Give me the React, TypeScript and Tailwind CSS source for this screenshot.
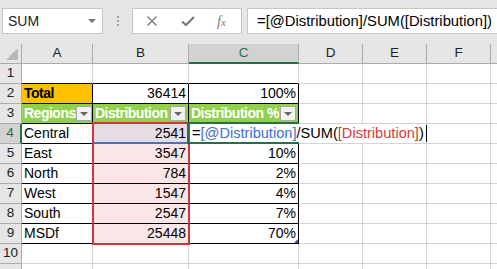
import clsx from "clsx";

const colWidths = ["w-[22px]", "w-[71px]", "w-[96px]", "w-[110px]", "w-[64px]", "w-[64px]", "w-[64px]", "w-[64px]"];
const letters = ["A", "B", "C", "D", "E", "F", ""];

type CellSpec = {
    text?: string;
    align?: "left" | "right";
    bg?: string;
    bold?: boolean;
    white?: boolean;
    filter?: boolean;
    black?: boolean;
};

const rows: CellSpec[][] = [
    [{}, {}, {}],
    [
        { text: "Total", bold: true, bg: "bg-[#ffc000]", black: true },
        { text: "36414", align: "right", black: true },
        { text: "100%", align: "right", black: true },
    ],
    [
        { text: "Regions", bold: true, white: true, bg: "bg-[#92d050]", filter: true, black: true },
        { text: "Distribution", bold: true, white: true, bg: "bg-[#92d050]", filter: true, black: true },
        { text: "Distribution %", bold: true, white: true, bg: "bg-[#92d050]", filter: true, black: true },
    ],
    [
        { text: "Central", black: true },
        { text: "2541", align: "right", bg: "bg-[#e6dce4]", black: true },
        { text: "", black: true },
    ],
    [{ text: "East", black: true }, { text: "3547", align: "right", bg: "bg-[#fae6e6]", black: true }, { text: "10%", align: "right", black: true }],
    [{ text: "North", black: true }, { text: "784", align: "right", bg: "bg-[#fae6e6]", black: true }, { text: "2%", align: "right", black: true }],
    [{ text: "West", black: true }, { text: "1547", align: "right", bg: "bg-[#fae6e6]", black: true }, { text: "4%", align: "right", black: true }],
    [{ text: "South", black: true }, { text: "2547", align: "right", bg: "bg-[#fae6e6]", black: true }, { text: "7%", align: "right", black: true }],
    [{ text: "MSDf", black: true }, { text: "25448", align: "right", bg: "bg-[#fae6e6]", black: true }, { text: "70%", align: "right", black: true }],
    [{}, {}, {}],
    [{}, {}, {}],
];

function FilterButton() {
    return (
        <div className="ml-auto flex h-[15px] w-[16px] shrink-0 items-center justify-center border border-[#a6a6a6] bg-[#f2f2f2]">
            <div className="h-0 w-0 border-x-[4px] border-t-[4px] border-x-transparent border-t-[#666]" />
        </div>
    );
}

function Toolbar() {
    return (
        <div className="flex h-[44px] items-start bg-[#e6e6e6] pt-[8px]">
            <div className="ml-[2px] flex h-[26px] w-[101px] shrink-0 items-center border border-[#c6c6c6] bg-white pl-[5px] pr-[6px] text-[14px] text-[#222]">
                SUM
                <div className="ml-auto h-0 w-0 border-x-[4px] border-t-[4px] border-x-transparent border-t-[#777]" />
            </div>
            <div className="ml-[13px] flex h-[26px] w-[3px] flex-col items-center justify-center gap-[2px]">
                <div className="h-[2px] w-[2px] bg-[#a0a0a0]" />
                <div className="h-[2px] w-[2px] bg-[#a0a0a0]" />
                <div className="h-[2px] w-[2px] bg-[#a0a0a0]" />
            </div>
            <div className="ml-[13px] flex h-[26px] w-[110px] shrink-0 items-center border border-[#c6c6c6] bg-white pl-[13px]">
                <svg width="12" height="12" viewBox="0 0 12 12" className="text-[#7a7a7a]">
                    <path d="M1.5 1.5 L10.5 10.5 M10.5 1.5 L1.5 10.5" stroke="currentColor" strokeWidth="1.4" />
                </svg>
                <svg width="14" height="12" viewBox="0 0 14 12" className="ml-[23px] text-[#7a7a7a]">
                    <path d="M1 6.5 L5 10 L13 2" stroke="currentColor" strokeWidth="2.2" fill="none" />
                </svg>
                <span className="ml-[22px] font-['Liberation_Serif'] text-[14px] italic text-[#7a7a7a]">
                    f<span className="text-[11px]">x</span>
                </span>
            </div>
            <div className="ml-[5px] flex h-[26px] flex-1 items-center border border-r-0 border-[#c6c6c6] bg-white pl-[9px] text-[14.8px] text-black">
                =[@Distribution]/SUM([Distribution])
            </div>
        </div>
    );
}

function HeaderRow() {
    return (
        <div className="flex h-[20px] bg-[#e6e6e6]">
            <div className={clsx(colWidths[0], "relative h-full shrink-0 border-r border-b border-[#ababab]")}>
                <div className="absolute right-[3px] bottom-[3px] h-0 w-0 border-b-[12px] border-l-[12px] border-l-transparent border-b-[#b7b7b7]" />
            </div>
            {letters.map((l, i) => (
                <div
                    key={i}
                    className={clsx(
                        colWidths[i + 1],
                        "flex h-full shrink-0 items-center justify-center border-r border-[#ababab] text-[13.5px]",
                        l === "C" ? "border-b-2 border-b-[#217346] bg-[#d2d2d2] text-[#217346]" : "border-b text-[#222]"
                    )}
                >
                    {l}
                </div>
            ))}
        </div>
    );
}

function DataRow({ index, cells }: { index: number; cells: CellSpec[] }) {
    const n = index + 1;
    const active = n === 4;
    const nextBlack = index + 1 < rows.length && rows[index + 1][0].black;
    return (
        <div className="flex h-[20px]">
            <div
                className={clsx(
                    colWidths[0],
                    "flex h-full shrink-0 items-center justify-center border-b border-[#ababab] text-[13.5px]",
                    active ? "border-r-2 border-r-[#217346] bg-[#d2d2d2] text-[#217346]" : "border-r bg-[#e6e6e6] text-[#222]"
                )}
            >
                {n < 11 ? n : ""}
            </div>
            {cells.map((c, i) => {
                if (active && i === 2) {
                    return (
                        <div key={i} className="flex h-full w-[238px] shrink-0 items-center border-r border-b border-[#d4d4d4] bg-white pl-[3px] text-[14.6px] whitespace-nowrap">
                            <span className="text-black">=</span>
                            <span className="text-[#3c6fd1]">[@Distribution]</span>
                            <span className="text-black">/SUM(</span>
                            <span className="text-[#d8393f]">[Distribution]</span>
                            <span className="text-black">)</span>
                            <span className="ml-[2px] h-[17px] w-[1px] bg-black" />
                        </div>
                    );
                }
                const blackB = c.black || nextBlack;
                return (
                    <div
                        key={i}
                        className={clsx(
                            colWidths[i + 1],
                            "flex h-full shrink-0 items-center overflow-hidden whitespace-nowrap border-r border-b border-[#d4d4d4] px-[2px]",
                            c.bg,
                            c.black && "border-r-black",
                            blackB && "border-b-black",
                            c.align === "right" ? "justify-end" : "justify-start",
                            c.bold ? "text-[14px] font-bold tracking-[-0.5px]" : "text-[14px]",
                            c.white ? "text-white" : "text-black"
                        )}
                    >
                        {c.text}
                        {c.filter && <FilterButton />}
                    </div>
                );
            })}
            {Array.from({ length: active ? 2 : 4 }).map((_, i) => (
                <div key={"e" + i} className={clsx(colWidths[active ? 6 + i : 4 + i], "h-full shrink-0 border-r border-b border-[#d4d4d4]")} />
            ))}
        </div>
    );
}

export default function App() {
    return (
        <div className="relative h-[269px] w-[497px] overflow-hidden bg-white font-['Liberation_Sans',sans-serif]">
            <Toolbar />
            <HeaderRow />
            {rows.map((cells, i) => (
                <DataRow key={i} index={i} cells={cells} />
            ))}
            {/* reference highlight for [Distribution] */}
            <div className="pointer-events-none absolute top-[122px] left-[92px] h-[123px] w-[98px] border-2 border-[#c8383e]" />
            {/* [@Distribution] */}
            <div className="pointer-events-none absolute top-[142px] left-[94px] h-[2px] w-[93px] bg-[#4472c4]" />
            {/* active cell */}
            <div className="pointer-events-none absolute top-[122px] left-[187px] h-[22px] w-[112px] border-y-2 border-l-2 border-[#217346]" />
            {/* table resize handle */}
            <div className="pointer-events-none absolute top-[239px] left-[294px] h-0 w-0 border-b-[4px] border-l-[4px] border-l-transparent border-b-[#3b4fa0]" />
        </div>
    );
}
